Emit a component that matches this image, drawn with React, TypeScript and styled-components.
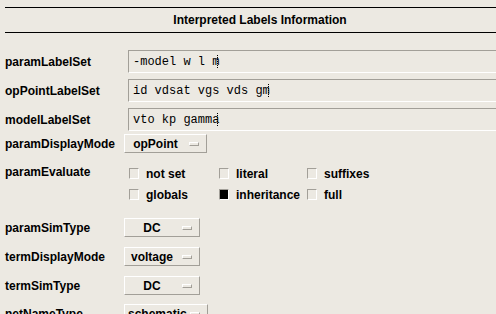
import styled, { createGlobalStyle } from 'styled-components';

const BG = '#ece9e2';
const SHADOW = '#a29f98';
const LIGHT = '#ffffff';

const GlobalStyle = createGlobalStyle`
  html, body {
    margin: 0;
    padding: 0;
    overflow: hidden;
    background: ${BG};
  }
  body {
    font-family: 'Liberation Sans', Arial, sans-serif;
    font-size: 12px;
    color: #000;
  }
`;

interface RowProps {
  $top: number;
}

interface OptionProps {
  $labelWidth: number;
}

interface CheckProps {
  $checked?: boolean;
}

const textRows = [
  { label: 'paramLabelSet', value: '-model w l m', top: 17 },
  { label: 'opPointLabelSet', value: 'id vdsat vgs vds gm', top: 6 },
  { label: 'modelLabelSet', value: 'vto kp gamma', top: 6 },
];

const evalOptions = [
  { label: 'not set', checked: false },
  { label: 'literal', checked: false },
  { label: 'suffixes', checked: false },
  { label: 'globals', checked: false },
  { label: 'inheritance', checked: true },
  { label: 'full', checked: false },
];

const menuRows = [
  { label: 'paramSimType', value: 'DC', width: 48, top: 13 },
  { label: 'termDisplayMode', value: 'voltage', width: 48, top: 10 },
  { label: 'termSimType', value: 'DC', width: 48, top: 10 },
  { label: 'netNameType', value: 'schematic', width: 56, top: 9 },
];

export default function App() {
  return (
    <>
      <GlobalStyle />
      <Panel>
        <Header>
          <Title>Interpreted Labels Information</Title>
        </Header>
        {textRows.map(row => (
          <Row key={row.label} $top={row.top}>
            <Label>{row.label}</Label>
            <TextField>
              {row.value}
              <Caret />
            </TextField>
          </Row>
        ))}
        <Row $top={3}>
          <Label>paramDisplayMode</Label>
          <OptionMenu $labelWidth={55}>
            <OptionText>opPoint</OptionText>
            <Indicator />
          </OptionMenu>
        </Row>
        <EvalRow>
          <EvalLabel>paramEvaluate</EvalLabel>
          <CheckGrid>
            {evalOptions.map(opt => (
              <CheckItem key={opt.label}>
                <CheckBox $checked={opt.checked} />
                {opt.label}
              </CheckItem>
            ))}
          </CheckGrid>
        </EvalRow>
        {menuRows.map(row => (
          <Row key={row.label} $top={row.top}>
            <Label>{row.label}</Label>
            <OptionMenu $labelWidth={row.width}>
              <OptionText>{row.value}</OptionText>
              <Indicator />
            </OptionMenu>
          </Row>
        ))}
      </Panel>
    </>
  );
}

const Panel = styled.div`
  display: flex;
  flex-direction: column;
  width: 560px;
`;

const Header = styled.div`
  display: flex;
  align-items: center;
  justify-content: center;
  width: 510px;
  height: 24px;
  margin: 7px 0 0 5px;
  border-top: 1px solid #000;
  border-bottom: 1px solid #000;
`;

const Title = styled.span`
  font-weight: bold;
  font-size: 12px;
`;

const Row = styled.div<RowProps>`
  display: flex;
  align-items: center;
  margin-top: ${props => props.$top}px;
`;

const Label = styled.div`
  flex: 0 0 119px;
  padding-left: 5px;
  font-weight: bold;
  font-size: 12px;
  line-height: 14px;
  white-space: nowrap;
`;

const EvalLabel = styled(Label)`
  line-height: 19px;
`;

const TextField = styled.div`
  box-sizing: border-box;
  display: flex;
  align-items: center;
  width: 420px;
  height: 23px;
  margin-left: 4px;
  padding-left: 4px;
  border-top: 1px solid ${SHADOW};
  border-left: 1px solid ${SHADOW};
  border-bottom: 1px solid ${LIGHT};
  border-right: 1px solid ${LIGHT};
  font-family: 'Liberation Mono', 'Courier New', monospace;
  font-size: 12px;
  white-space: pre;
`;

const Caret = styled.span`
  display: inline-block;
  width: 0;
  height: 13px;
  margin-left: -2px;
  border-left: 1px dotted #000;
`;

const OptionMenu = styled.div<OptionProps>`
  box-sizing: border-box;
  display: flex;
  align-items: center;
  height: 19px;
  padding: 0 7px 0 3px;
  border-top: 1px solid ${LIGHT};
  border-left: 1px solid ${LIGHT};
  border-bottom: 1px solid ${SHADOW};
  border-right: 1px solid ${SHADOW};

  & > span:first-child {
    width: ${props => props.$labelWidth}px;
  }
`;

const OptionText = styled.span`
  font-weight: bold;
  font-size: 12px;
  text-align: center;
  white-space: nowrap;
`;

const Indicator = styled.span`
  box-sizing: border-box;
  width: 10px;
  height: 4px;
  margin-left: 6px;
  border-top: 1px solid ${LIGHT};
  border-left: 1px solid ${LIGHT};
  border-bottom: 1px solid ${SHADOW};
  border-right: 1px solid ${SHADOW};
`;

const EvalRow = styled.div`
  display: flex;
  align-items: flex-start;
  margin-top: 10px;
`;

const CheckGrid = styled.div`
  display: grid;
  grid-template-columns: 90px 88px auto;
  grid-auto-rows: 21px;
  margin-left: 5px;
`;

const CheckItem = styled.div`
  display: flex;
  align-items: center;
  gap: 7px;
  font-weight: bold;
  font-size: 12px;
  white-space: nowrap;
`;

const CheckBox = styled.span<CheckProps>`
  box-sizing: border-box;
  width: 10px;
  height: 11px;
  border-top: 1px solid ${SHADOW};
  border-left: 1px solid ${SHADOW};
  border-bottom: 1px solid ${LIGHT};
  border-right: 1px solid ${LIGHT};
  background: ${props => (props.$checked ? '#000' : 'transparent')};
`;
